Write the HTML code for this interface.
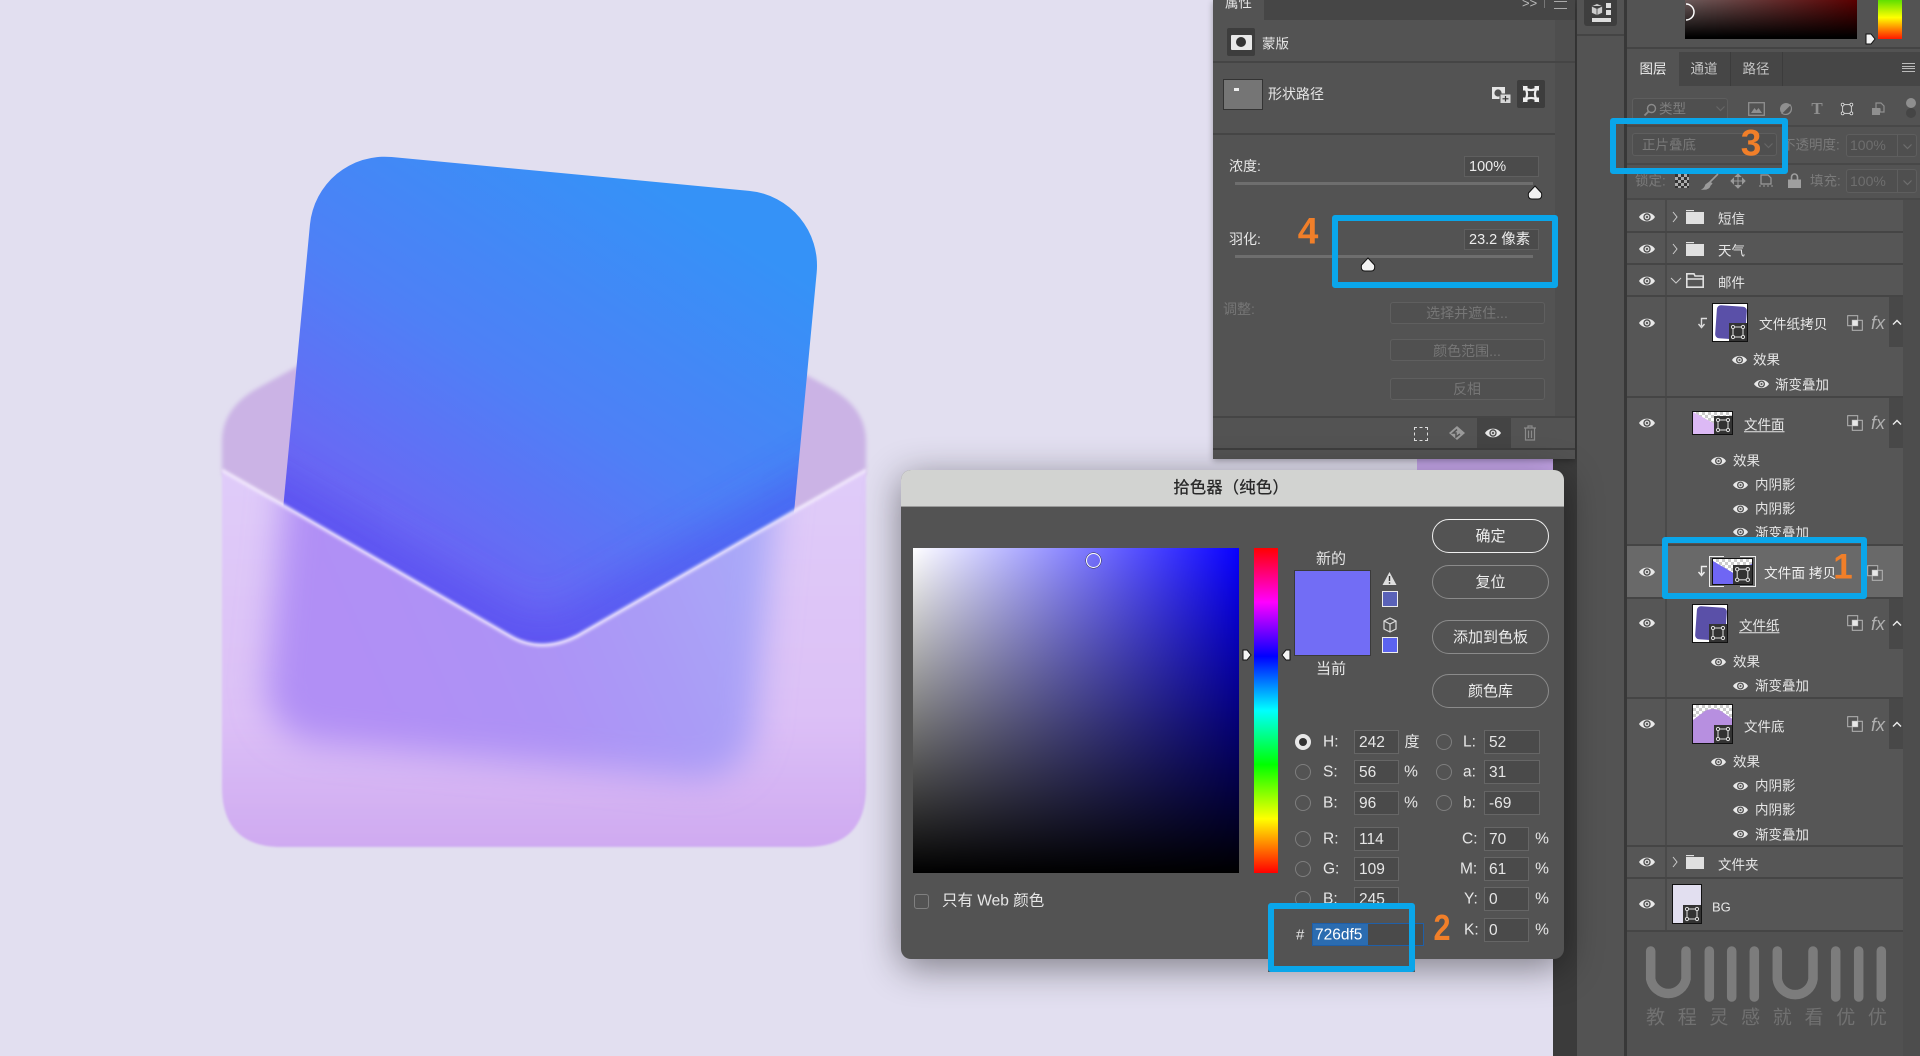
<!DOCTYPE html>
<html><head><meta charset="utf-8"><style>
html,body{margin:0;padding:0}
body{width:1920px;height:1056px;overflow:hidden;position:relative;background:#e2dff0;font-family:"Liberation Sans","Noto Sans CJK SC",sans-serif}
div,span,svg.a{position:absolute}
.t{position:absolute;white-space:nowrap;color:#e6e6e6;font-size:13.5px;line-height:1;transform:translateY(-50%)}
.c{position:absolute;white-space:nowrap;color:#e6e6e6;font-size:14px;line-height:1;transform:translate(-50%,-50%)}
.d{color:#767676}
.b{position:absolute;border:6px solid #0aa6ea;border-radius:3px;box-sizing:border-box}
.o{position:absolute;color:#f17f29;font-weight:bold;line-height:1;transform:translate(-50%,-50%)}
.i{position:absolute;box-sizing:border-box;background:#4a4a4a;border:1px solid #666;color:#e6e6e6;font-size:15.5px;line-height:23px;padding-left:4px;height:24px}
.p{position:absolute;box-sizing:border-box;background:#4b4b4b;border:1px solid #5f5f5f;color:#ececec;font-size:14.5px;line-height:20px;padding-left:4px;height:21px}
.x{position:absolute;box-sizing:border-box;border:1px solid #666;border-radius:3px;background:#505050}
.btn{position:absolute;box-sizing:border-box;left:1432px;width:117px;height:34px;border:1.5px solid #8b8b8b;border-radius:17px;color:#ececec;font-size:15px;text-align:center;line-height:33px}
.r{position:absolute;box-sizing:border-box;width:16px;height:16px;border:1.5px solid #7e7e7e;border-radius:50%;left:1295px}
.l{position:absolute;height:2px;background:#454545;left:1627px;width:276px}
.thumb{position:absolute;box-sizing:border-box;border:1px solid #111;overflow:hidden}
.ck{background:#fff;background-image:linear-gradient(45deg,#ccc 25%,transparent 25%,transparent 75%,#ccc 75%),linear-gradient(45deg,#ccc 25%,transparent 25%,transparent 75%,#ccc 75%);background-size:6px 6px;background-position:0 0,3px 3px}
.h{position:absolute;width:20px;height:20px;right:0;bottom:0;background:#333}
.fx{position:absolute;font:italic 18px "Liberation Sans",sans-serif;color:#b0b0b0;line-height:1;transform:translateY(-50%);left:1871px}
svg.a{overflow:visible}
</style></head><body>
<svg width="0" height="0" style="position:absolute"><defs>
<symbol id="e" viewBox="0 0 16 12"><path d="M0 6C3.500 .2 12.500 .2 16 6C12.500 11.800 3.500 11.800 0 6Z" fill="#e8e8e8"/><circle cx="8" cy="6" r="3.700" fill="#4a4a4a"/><circle cx="8" cy="6" r="2.400" fill="#d8d8d8"/><circle cx="8" cy="6" r="1.100" fill="#555"/></symbol>
<symbol id="q" viewBox="0 0 16 16"><rect x="3" y="3" width="10" height="10" fill="none" stroke="#ddd" stroke-width="1"/><g fill="#333" stroke="#ddd"><circle cx="3" cy="3" r="1.6"/><circle cx="13" cy="3" r="1.6"/><circle cx="3" cy="13" r="1.6"/><circle cx="13" cy="13" r="1.6"/></g></symbol>
<symbol id="k" viewBox="0 0 16 16"><rect x=".7" y=".7" width="10" height="10" fill="#535353" stroke="#b5b5b5" stroke-width="1"/><rect x="5.3" y="5.3" width="10" height="10" fill="none" stroke="#b5b5b5" stroke-width="1"/><rect x="5.3" y="5.3" width="5.4" height="5.4" fill="#e8e8e8"/></symbol>
<symbol id="f" viewBox="0 0 18 15"><path d="M0 1H8V3H18V15H0Z" fill="#e0e0e0"/><path d="M0 2.6H8" stroke="#535353" stroke-width=".8"/></symbol>
<filter id="f1" x="-5%" y="-5%" width="110%" height="110%"><feGaussianBlur stdDeviation="2"/></filter>
<filter id="f2" filterUnits="userSpaceOnUse" x="100" y="0" width="900" height="1000"><feGaussianBlur stdDeviation="17"/></filter>
<filter id="f3" filterUnits="userSpaceOnUse" x="100" y="300" width="900" height="500"><feGaussianBlur stdDeviation="24"/></filter>
<filter id="f4" filterUnits="userSpaceOnUse" x="190" y="440" width="710" height="440"><feGaussianBlur stdDeviation="1.1"/></filter>
<filter id="f5" filterUnits="userSpaceOnUse" x="190" y="440" width="710" height="240"><feGaussianBlur stdDeviation="1.5"/></filter>
<linearGradient id="gp" gradientUnits="userSpaceOnUse" x1="690" y1="170" x2="450" y2="640"><stop offset="0" stop-color="#3592f7"/><stop offset=".45" stop-color="#4e80f6"/><stop offset=".8" stop-color="#6a68f4"/><stop offset="1" stop-color="#6a5cf2"/></linearGradient>
<linearGradient id="gf" x1="0" y1="0" x2="0" y2="1"><stop offset="0" stop-color="#e0ccf9"/><stop offset=".65" stop-color="#dcc0f6"/><stop offset="1" stop-color="#cfaaf1"/></linearGradient>
<linearGradient id="gi" gradientUnits="userSpaceOnUse" x1="775" y1="500" x2="420" y2="700"><stop offset="0" stop-color="#a9a8f8"/><stop offset=".3" stop-color="#aa9bf6"/><stop offset=".6" stop-color="#ad92f5"/><stop offset="1" stop-color="#b18ff5"/></linearGradient>
<clipPath id="cf"><path d="M222 470L510 636Q541 654 577 636L866 470V787Q866 847 806 847H282Q222 847 222 787Z"/></clipPath>
<clipPath id="cp"><rect x="317" y="150" width="509" height="590" rx="75" transform="rotate(5.4 317 150)"/></clipPath>
</defs></svg>

<!-- artwork -->
<svg class="a" style="left:0;top:0" width="1920" height="1056">
<path d="M222 474V442Q222 408 258 388L400 310H688L830 388Q866 408 866 442V474L541 645Z" fill="#cbb3e5" filter="url(#f1)"/>
<rect x="317" y="150" width="509" height="590" rx="75" transform="rotate(5.4 317 150)" fill="url(#gp)"/>
<g clip-path="url(#cp)"><path d="M222 470L541 652L866 470" fill="none" stroke="#4a3aee" stroke-width="34" opacity=".62" filter="url(#f3)"/></g>
<path d="M222 470L510 636Q541 654 577 636L866 470V787Q866 847 806 847H282Q222 847 222 787Z" fill="url(#gf)" filter="url(#f4)"/>
<g clip-path="url(#cf)"><rect x="317" y="150" width="490" height="590" rx="55" transform="rotate(5.4 317 150)" fill="url(#gi)" filter="url(#f2)"/></g>
<path d="M222 470L510 636Q541 654 577 636L866 470" fill="none" stroke="#f8f2ff" stroke-width="3" opacity=".92" filter="url(#f5)"/>
</svg>

<!-- dark gutter + strip under properties -->
<div style="left:1417px;top:459px;width:136px;height:12px;background:#c9a9ee"></div>
<div style="left:1553px;top:0;width:24px;height:1056px;background:#3b3b3b"></div>

<!-- properties panel -->
<div style="left:1213px;top:0;width:362px;height:459px;background:#535353;box-shadow:0 2px 6px rgba(0,0,0,.3)"></div>
<div style="left:1264px;top:0;width:311px;height:20px;background:#464646"></div>
<div style="left:1555px;top:20px;width:20px;height:396px;background:#4e4e4e"></div>
<span class="t" style="left:1225px;top:3px;font-size:13.5px">属性</span>
<span class="t" style="left:1522px;top:3px;font-size:13px;color:#bbb">&gt;&gt;</span>
<div style="left:1544px;top:0;width:1px;height:8px;background:#777"></div>
<div style="left:1554px;top:1px;width:13px;height:6px;border-top:1px solid #aaa;border-bottom:1px solid #aaa"></div>
<div style="left:1227px;top:28px;width:28px;height:28px;background:#3d3d3d;border-radius:2px"></div>
<div style="left:1231px;top:35px;width:21px;height:15px;background:#e8e8e8;border-radius:1px"></div>
<div style="left:1236px;top:37px;width:10px;height:10px;background:#333;border-radius:50%"></div>
<span class="t" style="left:1262px;top:44px">蒙版</span>
<div style="left:1213px;top:61px;width:362px;height:2px;background:#454545"></div>
<div style="left:1223px;top:79px;width:40px;height:31px;box-sizing:border-box;background:#757575;border:1px solid #333"></div>
<div style="left:1234px;top:88px;width:5px;height:3px;background:#eee"></div>
<span class="t" style="left:1268px;top:94px;font-size:14px">形状路径</span>
<svg class="a" style="left:1491px;top:86px" width="21" height="18" viewBox="0 0 21 18"><path d="M1 1H14V13H1Z" fill="#e6e6e6"/><circle cx="7" cy="7" r="3.6" fill="#535353"/><rect x="9" y="8" width="11" height="9.5" fill="#d8d8d8" stroke="#535353"/><path d="M14.5 10V15.5M11.5 12.8H17.5" stroke="#333" stroke-width="1.2"/></svg>
<div style="left:1517px;top:80px;width:28px;height:28px;background:#3d3d3d;border-radius:2px"></div>
<svg class="a" style="left:1522px;top:85px" width="18" height="18" viewBox="0 0 18 18"><path d="M3.500 3.500C7 5.500 11 5.500 14.500 3.500C12.500 7 12.500 11 14.500 14.500C11 12.500 7 12.500 3.500 14.500C5.500 11 5.500 7 3.500 3.500Z" fill="none" stroke="#eee" stroke-width="2.200"/><g fill="#eee"><rect x="1" y="1" width="4.500" height="4.500"/><rect x="12.500" y="1" width="4.500" height="4.500"/><rect x="1" y="12.500" width="4.500" height="4.500"/><rect x="12.500" y="12.500" width="4.500" height="4.500"/></g></svg>
<div style="left:1213px;top:133px;width:342px;height:2px;background:#454545"></div>

<span class="t" style="left:1229px;top:166px;font-size:14px">浓度:</span>
<div class="p" style="left:1464px;top:156px;width:75px">100%</div>
<div style="left:1235px;top:182px;width:298px;height:3px;background:#6e6e6e"></div>
<svg class="a" style="left:1527px;top:185px" width="16" height="15" viewBox="0 0 16 15"><path d="M8 1L14.500 8Q15.500 14 11 14H5Q.5 14 1.500 8Z" fill="#f2f2f2" stroke="#111"/></svg>
<span class="t" style="left:1229px;top:239px;font-size:14px">羽化:</span>
<div class="p" style="left:1464px;top:229px;width:75px">23.2 像素</div>
<div style="left:1235px;top:255px;width:298px;height:3px;background:#6e6e6e"></div>
<svg class="a" style="left:1360px;top:257px" width="16" height="15" viewBox="0 0 16 15"><path d="M8 1L14.500 8Q15.500 14 11 14H5Q.5 14 1.500 8Z" fill="#f2f2f2" stroke="#111"/></svg>
<div class="b" style="left:1332px;top:215px;width:226px;height:73px"></div>
<span class="o" style="left:1308px;top:231px;font-size:37px">4</span>

<span class="t d" style="left:1223px;top:309px;font-size:14px">调整:</span>
<div class="x" style="left:1390px;top:302px;width:155px;height:22px;border-color:#5f5f5f"></div><span class="c d" style="left:1467px;top:313px">选择并遮住...</span>
<div class="x" style="left:1390px;top:339px;width:155px;height:22px;border-color:#5f5f5f"></div><span class="c d" style="left:1467px;top:351px">颜色范围...</span>
<div class="x" style="left:1390px;top:378px;width:155px;height:22px;border-color:#5f5f5f"></div><span class="c d" style="left:1467px;top:389px">反相</span>

<div style="left:1213px;top:416px;width:362px;height:2px;background:#454545"></div>
<div style="left:1213px;top:448px;width:362px;height:2px;background:#3e3e3e"></div>
<div style="left:1477px;top:418px;width:34px;height:30px;background:#444"></div>
<div style="left:1414px;top:427px;width:12px;height:12px;border:1px dashed #ddd"></div>
<svg class="a" style="left:1448px;top:425px" width="18" height="16" viewBox="0 0 18 16"><path d="M9 1L17 8L9 15L1 8Z" fill="#9a9a9a"/><path d="M9 4.500L5 8H8V12L12 9" fill="none" stroke="#535353" stroke-width="1.500"/></svg>
<svg class="a" style="left:1485px;top:427px" width="16" height="12"><use href="#e"/></svg>
<svg class="a" style="left:1523px;top:425px" width="14" height="16" viewBox="0 0 14 16"><path d="M1 3H13M5 3V1H9V3M2.500 3V15H11.500V3M5.500 5.500V13M8.500 5.500V13" fill="none" stroke="#8b8b8b" stroke-width="1.200"/></svg>

<!-- dock -->
<div style="left:1577px;top:0;width:47px;height:1056px;background:#535353"></div>
<div style="left:1577px;top:34px;width:47px;height:2px;background:#444"></div>
<div style="left:1624px;top:0;width:3px;height:1056px;background:#383838"></div>
<div style="left:1584px;top:0;width:33px;height:26px;background:#3e3e3e;border-radius:0 0 3px 3px"></div>
<svg class="a" style="left:1591px;top:3px" width="12" height="13" viewBox="0 0 12 13"><path d="M6 .5L11.500 3V10L6 12.500L.5 10V3Z M.5 3L6 5.500L11.500 3M6 5.500V12.500" fill="#ccc" stroke="#444" stroke-width=".8"/></svg>
<div style="left:1606px;top:3px;width:5px;height:5px;background:#ddd"></div>
<div style="left:1606px;top:10px;width:5px;height:5px;background:#ddd"></div>
<div style="left:1592px;top:18px;width:19px;height:4px;background:#ddd"></div>

<!-- layers column -->
<div style="left:1627px;top:0;width:293px;height:1056px;background:#535353"></div>
<div style="left:1685px;top:0;width:172px;height:39px;background:linear-gradient(to bottom,rgba(0,0,0,0),#000 95%),linear-gradient(to right,#6a5a5a,#5a0000)"></div>
<svg class="a" style="left:1685px;top:2px" width="10" height="20"><path d="M1 2A8 8 0 0 1 1 18" fill="none" stroke="#fff" stroke-width="1.500"/></svg>
<div style="left:1878px;top:0;width:24px;height:39px;background:linear-gradient(#5ee000,#ffff00 45%,#ff1800)"></div>
<svg class="a" style="left:1865px;top:33px" width="11" height="12" viewBox="0 0 11 12"><path d="M1 1H6L10 6L6 11H1Z" fill="#f5f5f5" stroke="#111"/></svg>
<div style="left:1627px;top:47px;width:293px;height:2px;background:#444"></div>
<div style="left:1627px;top:52px;width:293px;height:34px;background:#464646"></div>
<div style="left:1627px;top:52px;width:52px;height:35px;background:#535353"></div>
<div style="left:1730px;top:52px;width:1px;height:34px;background:#3c3c3c"></div>
<div style="left:1782px;top:52px;width:1px;height:34px;background:#3c3c3c"></div>
<span class="c" style="left:1653px;top:69px;font-size:13.500px;color:#eee">图层</span>
<span class="c" style="left:1704px;top:69px;font-size:13.500px;color:#c4c4c4">通道</span>
<span class="c" style="left:1756px;top:69px;font-size:13.500px;color:#c4c4c4">路径</span>
<div style="left:1902px;top:63px;width:13px;height:2px;border-top:1px solid #bbb;border-bottom:1px solid #bbb"></div>
<div style="left:1902px;top:68px;width:13px;height:2px;border-top:1px solid #bbb;border-bottom:1px solid #bbb"></div>

<!-- filter -->
<div class="x" style="left:1632px;top:98px;width:96px;height:23px;border-color:#5e5e5e;background:#4f4f4f"></div>
<svg class="a" style="left:1643px;top:103px" width="14" height="14" viewBox="0 0 14 14"><circle cx="8.500" cy="5.500" r="4" fill="none" stroke="#8a8a8a" stroke-width="1.400"/><path d="M5.500 8.500L1.500 12.500" stroke="#8a8a8a" stroke-width="1.800"/></svg>
<span class="t d" style="left:1659px;top:109px;font-size:13.500px;color:#7f7f7f">类型</span>
<svg class="a" style="left:1716px;top:106px" width="9" height="6"><path d="M.5 .5L4.500 4.500L8.500 .5" fill="none" stroke="#666" stroke-width="1.200"/></svg>
<svg class="a" style="left:1748px;top:102px" width="17" height="14" viewBox="0 0 17 14"><rect x=".7" y=".7" width="15.600" height="12.600" fill="none" stroke="#8f8f8f" stroke-width="1.300"/><path d="M3 11L6.500 6L8.500 8.500L10.500 6L14 11Z" fill="#8f8f8f"/></svg>
<svg class="a" style="left:1779px;top:102px" width="14" height="14" viewBox="0 0 14 14"><circle cx="7" cy="7" r="6" fill="#8f8f8f"/><path d="M2.800 11.200L11.200 2.800A6 6 0 0 1 2.800 11.200Z" fill="#535353" stroke="#8f8f8f"/></svg>
<span class="c" style="left:1817px;top:109px;font:bold 17px 'Liberation Serif',serif;color:#8f8f8f">T</span>
<svg class="a" style="left:1840px;top:102px" width="14" height="14"><use href="#q" width="14" height="14"/></svg>
<svg class="a" style="left:1871px;top:102px" width="14" height="14" viewBox="0 0 14 14"><path d="M5 1H10L13 4V10H9V7H5Z" fill="none" stroke="#8f8f8f" stroke-width="1.200"/><rect x="1" y="6" width="8" height="7" fill="#8f8f8f"/></svg>
<div style="left:1906px;top:98px;width:10px;height:10px;background:#8f8f8f;border-radius:50%"></div>
<div style="left:1906px;top:108px;width:10px;height:10px;background:#454545;border-radius:50%"></div>
<div class="l" style="top:125px;width:293px;background:#484848"></div>

<!-- blend -->
<div class="x" style="left:1632px;top:133px;width:145px;height:23px;border-color:#5e5e5e;background:#4f4f4f"></div>
<span class="t d" style="left:1642px;top:145px;font-size:13.500px;color:#7a7a7a">正片叠底</span>
<svg class="a" style="left:1764px;top:143px" width="9" height="6"><path d="M.5 .5L4.500 4.500L8.500 .5" fill="none" stroke="#666" stroke-width="1.200"/></svg>
<span class="t d" style="left:1782px;top:145px;font-size:13.500px;color:#7a7a7a">不透明度:</span>
<div class="x" style="left:1846px;top:134px;width:71px;height:23px;border-color:#5e5e5e;background:#4f4f4f"></div>
<div style="left:1897px;top:134px;width:1px;height:23px;background:#5e5e5e"></div>
<span class="t d" style="left:1850px;top:145px;font-size:14px;color:#6e6e6e">100%</span>
<svg class="a" style="left:1903px;top:144px" width="9" height="6"><path d="M.5 .5L4.500 4.500L8.500 .5" fill="none" stroke="#6e6e6e" stroke-width="1.200"/></svg>
<div class="l" style="top:163px;width:293px;background:#484848"></div>
<div class="b" style="left:1610px;top:118px;width:178px;height:56px"></div>
<span class="o" style="left:1751px;top:143px;font-size:37px">3</span>

<!-- lock -->
<span class="t d" style="left:1635px;top:181px;font-size:13.500px;color:#7a7a7a">锁定:</span>
<div style="left:1675px;top:174px;width:14px;height:14px;background-color:#333;background-image:linear-gradient(45deg,#aaa 25%,transparent 25%,transparent 75%,#aaa 75%),linear-gradient(45deg,#aaa 25%,transparent 25%,transparent 75%,#aaa 75%);background-size:6px 6px;background-position:0 0,3px 3px"></div>
<svg class="a" style="left:1703px;top:173px" width="16" height="17" viewBox="0 0 16 17"><path d="M15 1L7 9M7 9L3 12Q2 15 .5 16Q6 16 7 12L9 10" fill="#9a9a9a" stroke="#9a9a9a" stroke-width="1.600"/></svg>
<svg class="a" style="left:1730px;top:173px" width="16" height="16" viewBox="0 0 16 16"><path d="M8 1V15M1 8H15M8 1L5.500 3.500H10.500ZM8 15L5.500 12.500H10.500ZM1 8L3.500 5.500V10.500ZM15 8L12.500 5.500V10.500Z" fill="#9a9a9a" stroke="#9a9a9a"/></svg>
<svg class="a" style="left:1758px;top:174px" width="16" height="14" viewBox="0 0 16 14"><path d="M3 1H10L13 4V10H3Z" fill="none" stroke="#9a9a9a" stroke-width="1.200"/><path d="M1 12H15" stroke="#9a9a9a" stroke-dasharray="2 2"/></svg>
<svg class="a" style="left:1788px;top:173px" width="13" height="15" viewBox="0 0 13 15"><path d="M3.500 7V4A3 3 0 0 1 9.500 4V7" fill="none" stroke="#9f9f9f" stroke-width="1.600"/><rect x="0" y="6.500" width="13" height="8.500" fill="#9f9f9f"/></svg>
<span class="t d" style="left:1810px;top:181px;font-size:13.500px;color:#7a7a7a">填充:</span>
<div class="x" style="left:1846px;top:169px;width:71px;height:24px;border-color:#5e5e5e;background:#4f4f4f"></div>
<div style="left:1897px;top:169px;width:1px;height:24px;background:#5e5e5e"></div>
<span class="t d" style="left:1850px;top:181px;font-size:14px;color:#6e6e6e">100%</span>
<svg class="a" style="left:1903px;top:180px" width="9" height="6"><path d="M.5 .5L4.500 4.500L8.500 .5" fill="none" stroke="#6e6e6e" stroke-width="1.200"/></svg>
<div class="l" style="top:198px;width:293px;background:#484848"></div>

<!-- layers list bg -->
<div style="left:1903px;top:200px;width:17px;height:856px;background:#4d4d4d"></div>
<div style="left:1627px;top:200px;width:276px;height:731px;background:#565656"></div>
<div style="left:1627px;top:931px;width:276px;height:125px;background:#515151"></div>
<div style="left:1665px;top:200px;width:2px;height:731px;background:#4a4a4a"></div>
<!-- caret columns -->
<div style="left:1889px;top:296px;width:14px;height:51px;background:#484848"></div>
<div style="left:1889px;top:397px;width:14px;height:51px;background:#484848"></div>
<div style="left:1889px;top:598px;width:14px;height:51px;background:#484848"></div>
<div style="left:1889px;top:698px;width:14px;height:51px;background:#484848"></div>
<!-- selected row -->
<div style="left:1627px;top:546px;width:276px;height:51px;background:#696969"></div>
<!-- row lines -->
<div class="l" style="top:231px"></div><div class="l" style="top:263px"></div><div class="l" style="top:295px"></div>
<div class="l" style="top:396px"></div><div class="l" style="top:544px"></div><div class="l" style="top:597px"></div>
<div class="l" style="top:697px"></div><div class="l" style="top:845px"></div><div class="l" style="top:877px"></div><div class="l" style="top:930px"></div>

<!-- eyes -->
<svg class="a" style="left:1639px;top:211px" width="16" height="12"><use href="#e"/></svg>
<svg class="a" style="left:1639px;top:243px" width="16" height="12"><use href="#e"/></svg>
<svg class="a" style="left:1639px;top:275px" width="16" height="12"><use href="#e"/></svg>
<svg class="a" style="left:1639px;top:317px" width="16" height="12"><use href="#e"/></svg>
<svg class="a" style="left:1639px;top:417px" width="16" height="12"><use href="#e"/></svg>
<svg class="a" style="left:1639px;top:566px" width="16" height="12"><use href="#e"/></svg>
<svg class="a" style="left:1639px;top:617px" width="16" height="12"><use href="#e"/></svg>
<svg class="a" style="left:1639px;top:718px" width="16" height="12"><use href="#e"/></svg>
<svg class="a" style="left:1639px;top:856px" width="16" height="12"><use href="#e"/></svg>
<svg class="a" style="left:1639px;top:898px" width="16" height="12"><use href="#e"/></svg>

<!-- folders -->
<svg class="a" style="left:1672px;top:211px" width="6" height="12"><path d="M1 1L5 6L1 11" fill="none" stroke="#ccc"/></svg>
<svg class="a" style="left:1686px;top:209px" width="18" height="15"><use href="#f"/></svg>
<span class="t" style="left:1718px;top:219px">短信</span>
<svg class="a" style="left:1672px;top:243px" width="6" height="12"><path d="M1 1L5 6L1 11" fill="none" stroke="#ccc"/></svg>
<svg class="a" style="left:1686px;top:241px" width="18" height="15"><use href="#f"/></svg>
<span class="t" style="left:1718px;top:251px">天气</span>
<svg class="a" style="left:1670px;top:277px" width="12" height="7"><path d="M1 1L6 6L11 1" fill="none" stroke="#ccc"/></svg>
<svg class="a" style="left:1686px;top:273px" width="18" height="15" viewBox="0 0 18 15"><path d="M.8 .8H8L9 3H17.200V14.200H.8Z" fill="none" stroke="#e0e0e0" stroke-width="1.600"/><path d="M.8 6H17.200" stroke="#e0e0e0" stroke-width="1.600"/></svg>
<span class="t" style="left:1718px;top:283px">邮件</span>
<svg class="a" style="left:1672px;top:856px" width="6" height="12"><path d="M1 1L5 6L1 11" fill="none" stroke="#ccc"/></svg>
<svg class="a" style="left:1686px;top:854px" width="18" height="15"><use href="#f"/></svg>
<span class="t" style="left:1718px;top:865px">文件夹</span>

<!-- 文件纸拷贝 -->
<svg class="a" style="left:1697px;top:317px" width="12" height="12" viewBox="0 0 12 12"><path d="M10 1.500H4.500V9M1.500 7L4.500 10.500L7.500 7" fill="none" stroke="#ddd" stroke-width="1.400"/></svg>
<div class="thumb" style="left:1712px;top:303px;width:36px;height:39px;background:#fff"><div style="left:3px;top:2px;width:30px;height:33px;background:#5a50a8;border-radius:4px;transform:rotate(4deg)"></div><div class="h" style="width:18px;height:18px"></div><svg class="a" style="right:1px;bottom:1px" width="16" height="16"><use href="#q"/></svg></div>
<span class="t" style="left:1759px;top:325px;font-size:13.700px">文件纸拷贝</span>
<svg class="a" style="left:1847px;top:315px" width="16" height="16"><use href="#k"/></svg>
<span class="fx" style="top:323px">fx</span>
<svg class="a" style="left:1892px;top:319px" width="10" height="7"><path d="M1 5.500L5 1.500L9 5.500" fill="none" stroke="#eee" stroke-width="1.400"/></svg>
<svg class="a" style="left:1732px;top:354px" width="15" height="12"><use href="#e" width="15" height="12"/></svg>
<span class="t" style="left:1753px;top:360px">效果</span>
<svg class="a" style="left:1754px;top:378px" width="15" height="12"><use href="#e" width="15" height="12"/></svg>
<span class="t" style="left:1775px;top:385px">渐变叠加</span>

<!-- 文件面 -->
<div class="thumb ck" style="left:1692px;top:411px;width:41px;height:24px"><svg class="a" style="left:0;top:0" width="41" height="24"><path d="M0 0L22 12V24H0Z" fill="#dcb9f5"/></svg><div class="h" style="width:18px;height:18px"></div><svg class="a" style="right:1px;bottom:1px" width="16" height="16"><use href="#q"/></svg></div>
<span class="t" style="left:1744px;top:425px;text-decoration:underline;text-underline-offset:2px">文件面</span>
<svg class="a" style="left:1847px;top:415px" width="16" height="16"><use href="#k"/></svg>
<span class="fx" style="top:423px">fx</span>
<svg class="a" style="left:1892px;top:419px" width="10" height="7"><path d="M1 5.500L5 1.500L9 5.500" fill="none" stroke="#eee" stroke-width="1.400"/></svg>
<svg class="a" style="left:1711px;top:455px" width="15" height="12"><use href="#e" width="15" height="12"/></svg>
<span class="t" style="left:1733px;top:461px">效果</span>
<svg class="a" style="left:1733px;top:479px" width="15" height="12"><use href="#e" width="15" height="12"/></svg>
<span class="t" style="left:1755px;top:485px">内阴影</span>
<svg class="a" style="left:1733px;top:503px" width="15" height="12"><use href="#e" width="15" height="12"/></svg>
<span class="t" style="left:1755px;top:509px">内阴影</span>
<div style="left:1733px;top:526px;width:100px;height:18px;overflow:hidden"><svg class="a" style="left:0;top:0" width="15" height="12"><use href="#e" width="15" height="12"/></svg><span class="t" style="left:22px;top:7px">渐变叠加</span></div>

<!-- 文件面 拷贝 -->
<svg class="a" style="left:1697px;top:565px" width="12" height="12" viewBox="0 0 12 12"><path d="M10 1.500H4.500V9M1.500 7L4.500 10.500L7.500 7" fill="none" stroke="#eee" stroke-width="1.400"/></svg>
<div style="left:1709px;top:556px;width:47px;height:31px;box-sizing:border-box;border:1px solid #eee"></div>
<div style="left:1724px;top:554px;width:16px;height:36px;background:#696969"></div>
<div class="thumb ck" style="left:1712px;top:558px;width:41px;height:27px"><svg class="a" style="left:0;top:0" width="41" height="27"><path d="M0 2L22 15L40 4V27H0Z" fill="#6f66f4"/></svg><div class="h" style="width:19px;height:19px"></div><svg class="a" style="right:1px;bottom:1px" width="17" height="17"><use href="#q" width="17" height="17"/></svg></div>
<span class="t" style="left:1764px;top:574px;font-size:13.700px;color:#eee">文件面 拷贝</span>
<svg class="a" style="left:1867px;top:565px" width="16" height="16"><use href="#k"/></svg>
<div class="b" style="left:1662px;top:537px;width:205px;height:62px"></div>
<span class="o" style="left:1843px;top:567px;font-size:35px">1</span>

<!-- 文件纸 -->
<div class="thumb" style="left:1692px;top:604px;width:36px;height:39px;background:#fff"><div style="left:3px;top:2px;width:30px;height:33px;background:#5a50a8;border-radius:4px;transform:rotate(4deg)"></div><div class="h" style="width:18px;height:18px"></div><svg class="a" style="right:1px;bottom:1px" width="16" height="16"><use href="#q"/></svg></div>
<span class="t" style="left:1739px;top:626px;text-decoration:underline;text-underline-offset:2px">文件纸</span>
<svg class="a" style="left:1847px;top:615px" width="16" height="16"><use href="#k"/></svg>
<span class="fx" style="top:624px">fx</span>
<svg class="a" style="left:1892px;top:620px" width="10" height="7"><path d="M1 5.500L5 1.500L9 5.500" fill="none" stroke="#eee" stroke-width="1.400"/></svg>
<svg class="a" style="left:1711px;top:656px" width="15" height="12"><use href="#e" width="15" height="12"/></svg>
<span class="t" style="left:1733px;top:662px">效果</span>
<svg class="a" style="left:1733px;top:680px" width="15" height="12"><use href="#e" width="15" height="12"/></svg>
<span class="t" style="left:1755px;top:686px">渐变叠加</span>

<!-- 文件底 -->
<div class="thumb ck" style="left:1692px;top:704px;width:41px;height:40px"><svg class="a" style="left:0;top:0" width="41" height="40"><path d="M0 40V15L12 6Q20 2 28 6L41 15V40Z" fill="#b78fe0"/></svg><div class="h" style="width:18px;height:18px"></div><svg class="a" style="right:1px;bottom:1px" width="16" height="16"><use href="#q"/></svg></div>
<span class="t" style="left:1744px;top:727px">文件底</span>
<svg class="a" style="left:1847px;top:716px" width="16" height="16"><use href="#k"/></svg>
<span class="fx" style="top:725px">fx</span>
<svg class="a" style="left:1892px;top:721px" width="10" height="7"><path d="M1 5.500L5 1.500L9 5.500" fill="none" stroke="#eee" stroke-width="1.400"/></svg>
<svg class="a" style="left:1711px;top:756px" width="15" height="12"><use href="#e" width="15" height="12"/></svg>
<span class="t" style="left:1733px;top:762px">效果</span>
<svg class="a" style="left:1733px;top:780px" width="15" height="12"><use href="#e" width="15" height="12"/></svg>
<span class="t" style="left:1755px;top:786px">内阴影</span>
<svg class="a" style="left:1733px;top:804px" width="15" height="12"><use href="#e" width="15" height="12"/></svg>
<span class="t" style="left:1755px;top:810px">内阴影</span>
<svg class="a" style="left:1733px;top:828px" width="15" height="12"><use href="#e" width="15" height="12"/></svg>
<span class="t" style="left:1755px;top:835px">渐变叠加</span>

<!-- BG -->
<div class="thumb" style="left:1672px;top:884px;width:30px;height:40px;background:#e2dff0"><div class="h" style="width:18px;height:18px"></div><svg class="a" style="right:1px;bottom:1px" width="16" height="16"><use href="#q"/></svg></div>
<span class="t" style="left:1712px;top:907px;font-size:13px">BG</span>

<!-- watermark -->
<svg class="a" style="left:0;top:0" width="1920" height="1056" fill="none" stroke="#7c7c7c" stroke-width="9.500" stroke-linecap="round">
<path d="M1650.700 951V979A18 18 0 0 0 1686 979V951"/><path d="M1709.300 951V997M1731.700 951V997M1754.300 951V997"/>
<path d="M1777.300 951V979A18 18 0 0 0 1813 979V951"/><path d="M1835.700 951V997M1858.700 951V997M1881.300 951V997"/>
</svg>
<span class="t" style="left:1646px;top:1018px;font-size:19px;color:#717171;letter-spacing:12.700px">教程灵感就看优优</span>

<!-- color picker -->
<div style="left:901px;top:470px;width:663px;height:489px;background:#535353;border-radius:10px;box-shadow:0 8px 38px rgba(0,0,0,.45);overflow:hidden">
<div style="left:0;top:0;width:663px;height:36px;background:#d2d3d1;border-bottom:1px solid #9a9a9a"></div>
</div>
<span class="c" style="left:1231px;top:488px;font-size:16.500px;color:#2a2a2a;font-weight:500">拾色器（纯色）</span>
<div style="left:913px;top:548px;width:326px;height:325px;background:linear-gradient(to top,#000,rgba(0,0,0,0)),linear-gradient(to right,#fff,#0800ff)"></div>
<div style="left:1086px;top:553px;width:15px;height:15px;box-sizing:border-box;border:1.500px solid #fff;border-radius:50%;box-shadow:0 0 0 .5px #333"></div>
<div style="left:1254px;top:548px;width:24px;height:325px;background:linear-gradient(#f00,#f0f 16.660%,#00f 33.330%,#0ff 50%,#0f0 66.660%,#ff0 83.330%,#f00)"></div>
<svg class="a" style="left:1242px;top:649px" width="10" height="12" viewBox="0 0 10 12"><path d="M1 1H5L9 6L5 11H1Z" fill="#f5f5f5" stroke="#111"/></svg>
<svg class="a" style="left:1281px;top:649px" width="10" height="12" viewBox="0 0 10 12"><path d="M9 1H5L1 6L5 11H9Z" fill="#f5f5f5" stroke="#111"/></svg>
<span class="c" style="left:1331px;top:559px;font-size:15px">新的</span>
<div style="left:1294px;top:570px;width:77px;height:86px;box-sizing:border-box;background:#726df5;border:1px solid #3a3a3a"></div>
<span class="c" style="left:1331px;top:669px;font-size:15px">当前</span>
<svg class="a" style="left:1382px;top:571px" width="15" height="15" viewBox="0 0 15 15"><path d="M7.500 1L14.500 14H.5Z" fill="#dedede"/><path d="M7.500 5V10M7.500 11.300V12.800" stroke="#333" stroke-width="1.400"/></svg>
<div style="left:1382px;top:591px;width:16px;height:16px;box-sizing:border-box;background:#5a62b8;border:1.500px solid #eee"></div>
<svg class="a" style="left:1383px;top:617px" width="14" height="16" viewBox="0 0 14 16"><path d="M7 1L13 4V12L7 15L1 12V4ZM1 4L7 7L13 4M7 7V15" fill="none" stroke="#ddd" stroke-width="1.200"/></svg>
<div style="left:1382px;top:637px;width:16px;height:16px;box-sizing:border-box;background:#5b63f0;border:1.500px solid #eee"></div>

<div class="btn" style="top:519px;border-color:#f0f0f0">确定</div>
<div class="btn" style="top:565px">复位</div>
<div class="btn" style="top:620px">添加到色板</div>
<div class="btn" style="top:674px">颜色库</div>

<div class="r" style="top:734px;background:#e8e8e8;border-color:#e8e8e8"></div><div style="left:1299px;top:738px;width:8px;height:8px;border-radius:50%;background:#333"></div>
<div class="r" style="top:764px"></div><div class="r" style="top:795px"></div><div class="r" style="top:831px"></div><div class="r" style="top:861px"></div><div class="r" style="top:891px"></div>
<div class="r" style="left:1436px;top:734px"></div><div class="r" style="left:1436px;top:764px"></div><div class="r" style="left:1436px;top:795px"></div>

<span class="t" style="left:1323px;top:742px;font-size:15.500px">H:</span><div class="i" style="left:1354px;top:730px;width:45px">242</div><span class="c" style="left:1412px;top:742px;font-size:15px">度</span>
<span class="t" style="left:1323px;top:772px;font-size:15.500px">S:</span><div class="i" style="left:1354px;top:760px;width:45px">56</div><span class="c" style="left:1411px;top:772px;font-size:15.500px">%</span>
<span class="t" style="left:1323px;top:803px;font-size:15.500px">B:</span><div class="i" style="left:1354px;top:791px;width:45px">96</div><span class="c" style="left:1411px;top:803px;font-size:15.500px">%</span>
<span class="t" style="left:1323px;top:839px;font-size:15.500px">R:</span><div class="i" style="left:1354px;top:827px;width:45px">114</div>
<span class="t" style="left:1323px;top:869px;font-size:15.500px">G:</span><div class="i" style="left:1354px;top:857px;width:45px">109</div>
<span class="t" style="left:1323px;top:899px;font-size:15.500px">B:</span><div class="i" style="left:1354px;top:887px;width:45px">245</div>

<span class="t" style="left:1463px;top:742px;font-size:15.500px">L:</span><div class="i" style="left:1484px;top:730px;width:56px">52</div>
<span class="t" style="left:1463px;top:772px;font-size:15.500px">a:</span><div class="i" style="left:1484px;top:760px;width:56px">31</div>
<span class="t" style="left:1463px;top:803px;font-size:15.500px">b:</span><div class="i" style="left:1484px;top:791px;width:56px">-69</div>

<span class="t" style="left:1462px;top:839px;font-size:15.500px">C:</span><div class="i" style="left:1484px;top:827px;width:45px">70</div><span class="c" style="left:1542px;top:839px;font-size:15.500px">%</span>
<span class="t" style="left:1460px;top:869px;font-size:15.500px">M:</span><div class="i" style="left:1484px;top:857px;width:45px">61</div><span class="c" style="left:1542px;top:869px;font-size:15.500px">%</span>
<span class="t" style="left:1464px;top:899px;font-size:15.500px">Y:</span><div class="i" style="left:1484px;top:887px;width:45px">0</div><span class="c" style="left:1542px;top:899px;font-size:15.500px">%</span>
<span class="t" style="left:1464px;top:930px;font-size:15.500px">K:</span><div class="i" style="left:1484px;top:918px;width:45px">0</div><span class="c" style="left:1542px;top:930px;font-size:15.500px">%</span>

<div style="left:914px;top:894px;width:15px;height:15px;box-sizing:border-box;border:1.500px solid #808080;border-radius:3px"></div>
<span class="t" style="left:942px;top:901px;font-size:15.500px">只有 Web 颜色</span>

<!-- hex -->
<div style="left:1268px;top:904px;width:147px;height:68px;background:#535353"></div>
<div style="left:1312px;top:923px;width:112px;height:23px;box-sizing:border-box;background:#4a4a4a;border:1px solid #1f5fa8"></div>
<div style="left:1313px;top:924px;width:55px;height:21px;background:#2b6cb0"></div>
<span class="t" style="left:1296px;top:935px;font-size:15px">#</span>
<span class="t" style="left:1315px;top:935px;font-size:15.500px;color:#fff">726df5</span>
<div class="b" style="left:1268px;top:903px;width:147px;height:69px"></div>
<span class="o" style="left:1442px;top:928px;font-size:36px;transform:translate(-50%,-50%) scaleX(.85)">2</span>
</body></html>
